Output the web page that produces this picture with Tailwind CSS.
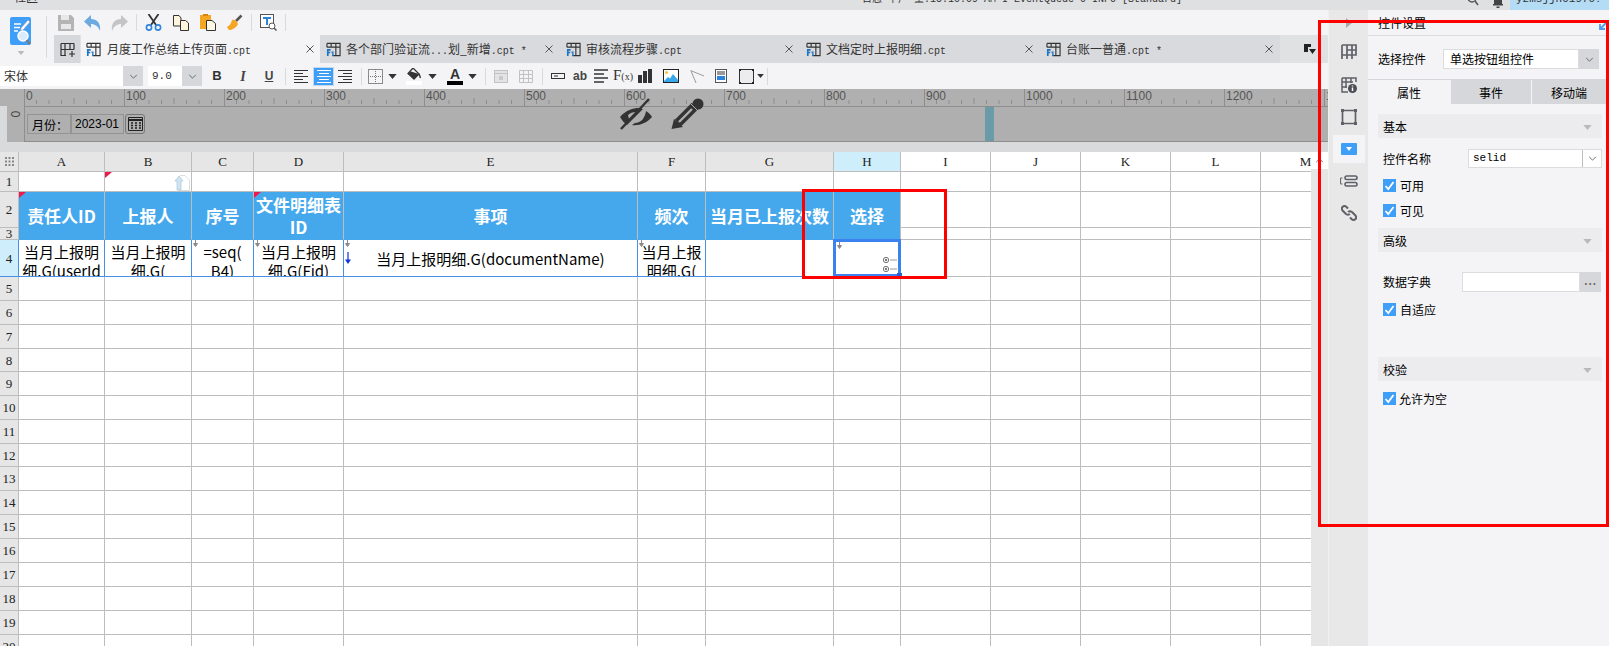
<!DOCTYPE html>
<html lang="zh">
<head>
<meta charset="utf-8">
<script src="https://cdn.jsdelivr.net/npm/@tailwindcss/browser@4"></script>
<title>报表设计器</title>
</head>
<body class="m-0 bg-[#f4f4f6]">
<svg class="hidden">
  <symbol id="cpt" viewBox="0 0 16 16">
    <path d="M5.500 1.500H15V14.500H7M5.500 1.500V5.500M1 1.500H5.500M1 1.500V5.500M1 5.500H15M10.500 1.500V14.500" fill="none" stroke="#333" stroke-width="1.200"/>
    <path d="M1 7.500H5V9.300H2.800V10.500H4.500V12H2.800V15H1Z" fill="#1d75c4"/>
    <path d="M5.800 10H8V15H6.600V11.500H5.800Z" fill="#1d75c4"/>
  </symbol>
  <symbol id="x" viewBox="0 0 10 10"><path d="M1.500 1.500L8.500 8.500M8.500 1.500L1.500 8.500" stroke="#555" stroke-width="1" fill="none"/></symbol>
  <symbol id="chev" viewBox="0 0 10 6"><path d="M1 1L5 5L9 1" stroke="#555" stroke-width="1" fill="none"/></symbol>
  <symbol id="tri" viewBox="0 0 10 6"><path d="M0 0H10L5 6Z" fill="#333"/></symbol>
  <symbol id="tg" viewBox="0 0 10 6"><path d="M0 0H10L5 6Z" fill="#b9b9bb"/></symbol>
  <symbol id="chk" viewBox="0 0 13 13"><path d="M2.500 7L5.300 10L10.500 3" stroke="#fff" stroke-width="1.800" fill="none"/></symbol>
  <symbol id="down" viewBox="0 0 7 7"><path d="M3.500 0V4M1.500 3.500H5.500L3.500 6.500Z" stroke="#8a8a8a" stroke-width="1" fill="#8a8a8a"/></symbol>
</svg>

<div class="relative w-[1609px] h-[646px] overflow-hidden flex flex-col font-['Noto_Sans_CJK_SC',sans-serif] text-black">
  <!-- title bar -->
  <div class="h-[10px] shrink-0 bg-[#dfe0e2] flex items-start overflow-hidden text-[12px] leading-[14px] text-[#333]">
    <span class="ml-[14px] mt-[-10px] w-[848px]">社区</span>
    <span class="mt-[-7px] w-[600px] whitespace-nowrap font-['Liberation_Mono','Noto_Sans_CJK_SC',monospace] text-[10px]">日志 下户 量:15:10:09 AM I EventQueue-0 INFO [Standard]</span>
    <svg class="ml-[5px] mt-[-3px] w-[12px] h-[10px]" viewBox="0 0 12 10"><circle cx="5" cy="1" r="4" fill="none" stroke="#555" stroke-width="1.300"/><path d="M8 4L11 8" stroke="#555" stroke-width="1.500"/></svg>
    <svg class="ml-[14px] w-[10px] h-[8px]" viewBox="0 0 10 8"><path d="M1 0H9V4H10V5.500H0V4H1ZM3.500 6.500H6.500V8H3.500Z" fill="#444"/></svg>
    <div class="ml-[7px] w-[99px] h-[10px] bg-[#b5dcf5] pl-[6px] font-['Liberation_Mono',monospace] text-[11px]"><span class="block mt-[-8px]">yzmsjjh01970?</span></div>
  </div>

  <div class="flex flex-1 min-h-0">
    <!-- left main -->
    <div class="w-[1328px] shrink-0 flex flex-col">
      <div class="h-[53px] flex bg-[#f4f4f6]">
        <div class="w-[54px] shrink-0 flex">
          <div class="w-[46px] flex flex-col items-center pt-[7px]">
            <div class="mr-[5px]">
              <svg class="w-[22px] h-[29px]" viewBox="0 0 22 29">
                <rect x="0" y="0" width="21" height="28" rx="2" fill="#3f9ef8"/>
                <path d="M4 7H11M4 10.500H10M4 14H8" stroke="#fff" stroke-width="1.300"/>
                <path d="M11 11L18 3L20 5L13 13L10.500 13.500Z" fill="#fff" stroke="#8a8a8a" stroke-width=".5"/>
                <circle cx="13" cy="19" r="5" fill="#d8ecfb" stroke="#fff" stroke-width="1.500"/>
                <path d="M16.500 23L20 27" stroke="#7a7a7a" stroke-width="2"/>
              </svg>
              <svg class="w-[8px] h-[4px] ml-[7px] mt-[5px]" viewBox="0 0 10 6"><use href="#tg"/></svg>
            </div>
          </div>
          <div class="w-px h-[42px] mt-[6px] bg-[#d9dadc]"></div>
        </div>
        <div class="flex-1 flex flex-col min-w-0">
          <!-- toolbar -->
          <div class="h-[25px] flex items-center ml-[-2px]">
            <span class="w-[27px] flex justify-center"><svg class="w-[16px] h-[16px]" viewBox="0 0 16 16"><path d="M0 0H13L16 3V16H0Z" fill="#b4b4b4"/><rect x="3" y="0" width="8" height="5" fill="#e8e8e8"/><rect x="3" y="9" width="10" height="5" fill="#e8e8e8"/></svg></span>
            <span class="w-[27px] flex justify-center"><svg class="w-[17px] h-[16px]" viewBox="0 0 17 16"><path d="M7 0V4C13 4 17 8 16 16C14 11 11 9 7 9V13L0 6.500Z" fill="#6ba9e0"/></svg></span>
            <span class="w-[27px] flex justify-center"><svg class="w-[17px] h-[16px]" viewBox="0 0 17 16"><path d="M10 0V4C4 4 0 8 1 16C3 11 6 9 10 9V13L17 6.500Z" fill="#c4c4c6"/></svg></span>
            <span class="w-px h-[17px] bg-[#d9dadc] ml-[3px] mr-[3px]"></span>
            <span class="w-[27px] flex justify-center"><svg class="w-[17px] h-[17px]" viewBox="0 0 17 17"><path d="M3.500 0L11 11M13.500 0L6 11" stroke="#333" stroke-width="1.800" fill="none"/><circle cx="4" cy="13.500" r="2.600" fill="none" stroke="#2c83df" stroke-width="1.600"/><circle cx="13" cy="13.500" r="2.600" fill="none" stroke="#2c83df" stroke-width="1.600"/></svg></span>
            <span class="w-[27px] flex justify-center"><svg class="w-[16px] h-[16px]" viewBox="0 0 16 16"><path d="M.5.500H6L8 3V11H.5Z" fill="#fff5dc" stroke="#333"/><path d="M7.500 5.500H12.500L15.500 8V15.500H7.500Z" fill="#fff5dc" stroke="#333"/></svg></span>
            <span class="w-[27px] flex justify-center"><svg class="w-[16px] h-[17px]" viewBox="0 0 16 17"><rect x="0" y="1" width="11" height="14" fill="#f5a623"/><rect x="3" y="0" width="5" height="2" fill="#d9860f"/><path d="M6.500 6.500H12L15.500 9.500V16.500H6.500Z" fill="#fff8e6" stroke="#333"/></svg></span>
            <span class="w-[27px] flex justify-center"><svg class="w-[16px] h-[17px]" viewBox="0 0 16 17"><path d="M9 7L14.500 1.500" stroke="#555" stroke-width="2.500"/><path d="M5 6C7 5 10 7 11 10C9 14 5 16 2 16C1 15 .5 14 0 13C2 12 4 10 5 6Z" fill="#f5a623"/></svg></span>
            <span class="w-px h-[17px] bg-[#d9dadc] ml-[3px] mr-[3px]"></span>
            <span class="w-[27px] flex justify-center"><svg class="w-[17px] h-[17px]" viewBox="0 0 17 17"><rect x=".5" y=".5" width="13" height="13" fill="#fff" stroke="#555"/><path d="M3 3H11V5H8V11H6V5H3Z" fill="#2c83df"/><circle cx="12" cy="12" r="3" fill="#fff" stroke="#555"/><path d="M14 14L16.500 16.500" stroke="#555" stroke-width="1.500"/></svg></span>
            <span class="w-px h-[17px] bg-[#d9dadc] ml-[3px]"></span>
          </div>
          <!-- tabs -->
          <div class="h-[28px] flex items-stretch text-[12px] text-[#333] font-['Noto_Sans_CJK_SC',sans-serif]">
            <div class="w-[26px] bg-[#d6d7da] flex items-center justify-center"><svg class="w-[15px] h-[15px]" viewBox="0 0 15 15"><path d="M1 1.500H14M1 7.500H14M1 1.500V13.500H6M5 1.500V13.500M10 1.500V7.500M14 1.500V7.500M9 12H15M12 9V15" stroke="#333" stroke-width="1.200" fill="none"/></svg></div>
            <div class="w-[240px] bg-[#f4f4f6] flex items-center pl-[5px] border-l border-[#e2e2e4]">
              <svg class="w-[15px] h-[15px] shrink-0"><use href="#cpt"/></svg>
              <span class="ml-[6px] w-[198px] whitespace-nowrap">月度工作总结上传页面<span class="font-['Liberation_Mono',monospace] text-[10px]">.cpt</span></span>
              <svg class="w-[10px] h-[10px]"><use href="#x"/></svg>
            </div>
            <div class="w-[240px] bg-[#d9dadd] flex items-center pl-[6px]">
              <svg class="w-[15px] h-[15px] shrink-0"><use href="#cpt"/></svg>
              <span class="ml-[5px] w-[198px] whitespace-nowrap">各个部门验证流<span class="font-['Liberation_Mono',monospace] text-[10px]">...</span>划_新增<span class="font-['Liberation_Mono',monospace] text-[10px]">.cpt *</span></span>
              <svg class="w-[10px] h-[10px]"><use href="#x"/></svg>
            </div>
            <div class="w-[240px] bg-[#d9dadd] flex items-center pl-[6px]">
              <svg class="w-[15px] h-[15px] shrink-0"><use href="#cpt"/></svg>
              <span class="ml-[5px] w-[198px] whitespace-nowrap">审核流程步骤<span class="font-['Liberation_Mono',monospace] text-[10px]">.cpt</span></span>
              <svg class="w-[10px] h-[10px]"><use href="#x"/></svg>
            </div>
            <div class="w-[240px] bg-[#d9dadd] flex items-center pl-[6px]">
              <svg class="w-[15px] h-[15px] shrink-0"><use href="#cpt"/></svg>
              <span class="ml-[5px] w-[198px] whitespace-nowrap">文档定时上报明细<span class="font-['Liberation_Mono',monospace] text-[10px]">.cpt</span></span>
              <svg class="w-[10px] h-[10px]"><use href="#x"/></svg>
            </div>
            <div class="w-[240px] bg-[#d9dadd] flex items-center pl-[6px]">
              <svg class="w-[15px] h-[15px] shrink-0"><use href="#cpt"/></svg>
              <span class="ml-[5px] w-[198px] whitespace-nowrap">台账一普通<span class="font-['Liberation_Mono',monospace] text-[10px]">.cpt *</span></span>
              <svg class="w-[10px] h-[10px]"><use href="#x"/></svg>
            </div>
            <div class="flex-1 bg-[#e0e1e3] flex items-center pl-[24px]"><svg class="w-[12px] h-[11px]" viewBox="0 0 12 11"><path d="M0 0H7V3H4V8H0Z" fill="#222"/><path d="M5 5H12L8.500 10Z" fill="#222"/></svg></div>
          </div>
        </div>
      </div>

      <!-- format row -->
      <div class="h-[26px] shrink-0 bg-[#f4f4f6] flex items-center text-[#333]">
        <div class="w-[143px] h-[20px] flex bg-[#d6d7da]"><span class="w-[123px] bg-white text-[12px] leading-[20px] pl-[4px]">宋体</span><span class="flex-1 flex items-center justify-center"><svg class="w-[9px] h-[5px]"><use href="#chev"/></svg></span></div>
        <div class="ml-[5px] w-[54px] h-[20px] flex bg-[#d6d7da]"><span class="w-[34px] bg-white text-[11px] leading-[20px] pl-[4px] font-['Liberation_Mono',monospace]">9.0</span><span class="flex-1 flex items-center justify-center"><svg class="w-[9px] h-[5px]"><use href="#chev"/></svg></span></div>
        <span class="w-[26px] ml-[2px] text-center text-[13px] font-bold font-['Liberation_Sans',sans-serif]">B</span>
        <span class="w-[26px] text-center text-[14px] italic font-bold font-['Liberation_Serif',serif] text-[#444]">I</span>
        <span class="w-[26px] text-center text-[12px] font-bold underline font-['Liberation_Sans',sans-serif] text-[#444]">U</span>
        <span class="w-px h-[17px] bg-[#d9dadc] ml-[3px]"></span>
        <span class="ml-[8px] w-[14px] flex"><svg class="w-[14px] h-[13px]" viewBox="0 0 14 13"><path d="M0 .5H14M0 3.500H9M0 6.500H14M0 9.500H9M0 12.500H14" stroke="#333"/></svg></span>
        <span class="ml-[5px] w-[21px] h-[19px] bg-[#3f9ef8] border border-[#c6d9ec] flex items-center justify-center"><svg class="w-[14px] h-[13px]" viewBox="0 0 14 13"><path d="M0 .5H14M2 3.500H12M0 6.500H14M2 9.500H12M0 12.500H14" stroke="#fff"/></svg></span>
        <span class="ml-[4px] w-[14px] flex"><svg class="w-[14px] h-[13px]" viewBox="0 0 14 13"><path d="M0 .5H14M5 3.500H14M0 6.500H14M5 9.500H14M0 12.500H14" stroke="#333"/></svg></span>
        <span class="w-px h-[17px] bg-[#d9dadc] ml-[9px]"></span>
        <svg class="ml-[6px] w-[15px] h-[15px]" viewBox="0 0 15 15"><path d="M.5.500H14.500V14.500H.5Z" fill="none" stroke="#222" stroke-dasharray="1 1"/><path d="M7.500 0V15M0 7.500H15" fill="none" stroke="#777" stroke-dasharray="1 1"/></svg>
        <svg class="ml-[5px] w-[9px] h-[5px]"><use href="#tri"/></svg>
        <span class="ml-[9px] w-[16px] h-[17px] flex flex-col items-center"><svg class="w-[14px] h-[12px]" viewBox="0 0 14 12"><path d="M6 0L12 6L7 11L1 5.500Z" fill="#f4f4f6" stroke="#333" stroke-width="1.300"/><path d="M4 3.500L12 6L7 11L1 5.500Z" fill="#333"/><path d="M12 6C13 8 13.500 9 13 10" stroke="#333" stroke-width="1.500" fill="none"/></svg><span class="w-[16px] h-[4px] bg-white mt-[1px]"></span></span>
        <svg class="ml-[6px] w-[9px] h-[5px]"><use href="#tri"/></svg>
        <span class="ml-[10px] w-[16px] h-[18px] flex flex-col items-center"><span class="text-[14px] leading-[14px] font-bold font-['Liberation_Sans',sans-serif]">A</span><span class="w-[16px] h-[4px] bg-black"></span></span>
        <svg class="ml-[5px] w-[9px] h-[5px]"><use href="#tri"/></svg>
        <span class="w-px h-[17px] bg-[#d9dadc] ml-[8px]"></span>
        <svg class="ml-[8px] w-[14px] h-[13px]" viewBox="0 0 14 13"><rect x=".5" y=".5" width="13" height="12" fill="#e3e3e5" stroke="#c2c2c4"/><path d="M0 3.500H14" stroke="#c2c2c4"/><rect x="5" y="6" width="4" height="4" fill="#c9c9cb"/></svg>
        <svg class="ml-[11px] w-[14px] h-[13px]" viewBox="0 0 14 13"><path d="M.5.500H13.500V12.500H.5ZM0 4.500H14M0 8.500H14M4.500 0V13M9.500 0V13" fill="none" stroke="#c2c2c4"/></svg>
        <span class="w-px h-[17px] bg-[#d9dadc] ml-[9px]"></span>
        <svg class="ml-[8px] w-[14px] h-[6px]" viewBox="0 0 14 6"><rect x=".5" y=".5" width="13" height="5" fill="none" stroke="#333"/><path d="M3 3H7" stroke="#333"/></svg>
        <span class="ml-[5px] w-[20px] text-center text-[12px] font-bold font-['Liberation_Sans',sans-serif] text-[#444]">ab</span>
        <svg class="ml-[4px] w-[14px] h-[14px]" viewBox="0 0 14 14"><path d="M0 1H14M0 5H10M0 9H14M0 13H10" stroke="#333" stroke-width="1.700"/></svg>
        <span class="ml-[5px] w-[20px] text-[15px] leading-[15px] font-['Liberation_Serif',serif] text-[#333] whitespace-nowrap">F<span class="text-[10px]">(x)</span></span>
        <svg class="ml-[5px] w-[14px] h-[14px]" viewBox="0 0 14 14"><path d="M0 6H4V14H0ZM5 2H9V14H5ZM10 0H14V14H10Z" fill="#333"/></svg>
        <svg class="ml-[11px] w-[16px] h-[14px]" viewBox="0 0 16 14"><rect x=".5" y=".5" width="15" height="13" fill="#fff" stroke="#222"/><circle cx="3.500" cy="3.500" r="1.500" fill="#f5c33b"/><path d="M1 12L5 8L7 9.500L10 5L15 11V13H1Z" fill="#37a8ec"/></svg>
        <svg class="ml-[11px] w-[14px] h-[13px]" viewBox="0 0 14 13"><path d="M.5.500L14 6M1 1L6 13" stroke="#9a9a9a" fill="none"/></svg>
        <svg class="ml-[11px] w-[12px] h-[14px]" viewBox="0 0 12 14"><rect x=".5" y=".5" width="11" height="13" fill="#fff" stroke="#555"/><path d="M2 3H10M2 5H10" stroke="#333"/><rect x="2" y="7" width="8" height="4" fill="#2c83df"/></svg>
        <svg class="ml-[12px] w-[15px] h-[15px]" viewBox="0 0 15 15"><path d="M.5.500H14.500V14.500H.5Z" fill="#ececee" stroke="#333"/><path d="M0 0H2V2H0ZM13 0H15V2H13ZM0 13H2V15H0ZM13 13H15V15H13Z" fill="#222"/></svg>
        <svg class="ml-[3px] w-[7px] h-[4px]"><use href="#tri"/></svg>
        <span class="w-px h-[17px] bg-[#d9dadc] ml-[3px]"></span>
      </div>

      <!-- ruler -->
      <div class="h-[17px] shrink-0 bg-[#b0b0b0] relative overflow-hidden pl-[24px] flex text-[12px] leading-[15px] text-[#555] font-['Liberation_Sans',sans-serif]">
        <svg class="absolute left-0 top-0 w-[1328px] h-[17px]">
          <defs><pattern id="ticks" x="24" y="0" width="100" height="17" patternUnits="userSpaceOnUse"><path d="M.5 0V17M12.500 11V15M25 11V15M37.500 11V15M50 9V15M62.500 11V15M75 11V15M87.500 11V15" stroke="#8e8e8e" fill="none"/></pattern></defs>
          <rect x="24" width="1304" height="17" fill="url(#ticks)"/>
        </svg>
        <span class="w-[100px] shrink-0 pl-[2px] relative">0</span><span class="w-[100px] shrink-0 pl-[2px] relative">100</span><span class="w-[100px] shrink-0 pl-[2px] relative">200</span><span class="w-[100px] shrink-0 pl-[2px] relative">300</span><span class="w-[100px] shrink-0 pl-[2px] relative">400</span><span class="w-[100px] shrink-0 pl-[2px] relative">500</span><span class="w-[100px] shrink-0 pl-[2px] relative">600</span><span class="w-[100px] shrink-0 pl-[2px] relative">700</span><span class="w-[100px] shrink-0 pl-[2px] relative">800</span><span class="w-[100px] shrink-0 pl-[2px] relative">900</span><span class="w-[100px] shrink-0 pl-[2px] relative">1000</span><span class="w-[100px] shrink-0 pl-[2px] relative">1100</span><span class="w-[100px] shrink-0 pl-[2px] relative">1200</span><span class="w-[100px] shrink-0 pl-[2px] relative">1300</span>
      </div>

      <!-- parameter form -->
      <div class="h-[36px] shrink-0 flex bg-[#d9dadc]">
        <div class="ml-[7px] w-[17px] bg-[#b0b0b0] text-[12px] leading-[12px] text-[#444] font-['Liberation_Sans',sans-serif] flex justify-center pt-[2px]"><span class="rotate-90 h-[12px]">0</span></div>
        <div class="flex-1 bg-[#afafaf] border-y border-l border-[#8e8e8e] flex">
          <div class="w-[960px] flex items-start pt-[7px] pl-[2px]">
            <span class="w-[44px] h-[20px] border border-[#949494] text-[12px] leading-[19px] pl-[4px]">月份：</span>
            <span class="w-[53px] h-[20px] border border-[#949494] text-[12px] leading-[18px] pl-[3px] font-['Liberation_Sans',sans-serif]">2023-01</span>
            <span class="ml-[1px] w-[20px] h-[20px] border-[1.500px] border-[#777] rounded-[3px] flex items-center justify-center"><svg class="w-[15px] h-[14px]" viewBox="0 0 15 14"><path d="M.5.500H14.500V13.500H.5Z" fill="none" stroke="#222"/><path d="M0 3H15" stroke="#222" stroke-width="2"/><path d="M3 6H5M7 6H9M11 6H13M3 8.500H5M7 8.500H9M11 8.500H13M3 11H5M7 11H9M11 11H13" stroke="#222" stroke-width="1.500"/></svg></span>
          </div>
          <div class="w-[9px] bg-[#6b9aa8]"></div>
        </div>
      </div>
      <div class="h-[10px] shrink-0 bg-[#d9dadc]"></div>

      <!-- grid -->
      <div class="flex-1 min-h-0 flex overflow-hidden">
        <div class="w-[1311px] shrink-0 overflow-hidden bg-white">
          <table class="w-[1351px] table-fixed border-separate border-spacing-0 [&_td]:border-r [&_td]:border-b [&_td]:border-[#bdbdbd] [&_td]:p-0 [&_td]:relative [&_th]:border-r [&_th]:border-b [&_th]:border-[#bdbdbd] [&_th]:p-0 [&_th]:font-normal [&_th]:text-[13px] [&_th]:leading-[11px] [&_th]:text-[#222] [&_th]:font-['Liberation_Serif',serif]">
            <colgroup><col class="w-[19px]"><col class="w-[86px]"><col class="w-[87px]"><col class="w-[62px]"><col class="w-[90px]"><col class="w-[294px]"><col class="w-[68px]"><col class="w-[128px]"><col class="w-[67px]"><col class="w-[90px]"><col class="w-[90px]"><col class="w-[90px]"><col class="w-[90px]"><col class="w-[90px]"></colgroup>
            <tbody>
              <tr class="h-[20px]">
                <th class="bg-[#e6e6e6]"><svg class="w-[9px] h-[9px] mx-auto" viewBox="0 0 9 9"><path d="M0 1H2M3.500 1H5.500M7 1H9M0 4.500H2M3.500 4.500H5.500M7 4.500H9M0 8H2M3.500 8H5.500M7 8H9" stroke="#888" stroke-width="2"/></svg></th>
                <th class="bg-[#e6e6e6]">A</th><th class="bg-[#e6e6e6]">B</th><th class="bg-[#e6e6e6]">C</th><th class="bg-[#e6e6e6]">D</th><th class="bg-[#e6e6e6]">E</th><th class="bg-[#e6e6e6]">F</th><th class="bg-[#e6e6e6]">G</th><th class="bg-[#cdeefa]">H</th><th class="bg-white">I</th><th class="bg-white">J</th><th class="bg-white">K</th><th class="bg-white">L</th><th class="bg-white">M</th>
              </tr>
              <tr class="h-[20px]">
                <th class="bg-[#e6e6e6]">1</th><td></td>
                <td><svg class="absolute left-0 top-0 w-[7px] h-[6px]" viewBox="0 0 7 6"><path d="M0 0H7L0 6Z" fill="#f0184a"/></svg><svg class="absolute right-[1px] top-[3px] w-[16px] h-[16px]" viewBox="0 0 16 16"><path d="M6 .5H11L15.500 5V15.500H4" fill="none" stroke="#d5dfe6"/><path d="M5 1L9 6H7V15H3V6H1Z" fill="#cfe3f0" stroke="#a9c6d8" stroke-width=".7"/></svg></td>
                <td></td><td></td><td></td><td></td><td></td><td></td><td></td><td></td><td></td><td></td><td></td>
              </tr>
              <tr class="h-[36px]">
                <th class="bg-[#e6e6e6]">2</th>
                <td rowspan="2" class="bg-[#46a8ec] !border-b-[#46a8ec] text-center text-white font-bold text-[17px] leading-[22px]"><svg class="absolute left-0 top-0 w-[7px] h-[6px]" viewBox="0 0 7 6"><path d="M0 0H7L0 6Z" fill="#f0184a"/></svg>责任人ID</td>
                <td rowspan="2" class="bg-[#46a8ec] !border-b-[#46a8ec] text-center text-white font-bold text-[17px] leading-[22px]">上报人</td>
                <td rowspan="2" class="bg-[#46a8ec] !border-b-[#46a8ec] text-center text-white font-bold text-[17px] leading-[22px]">序号</td>
                <td rowspan="2" class="bg-[#46a8ec] !border-b-[#46a8ec] text-center text-white font-bold text-[17px] leading-[22px] whitespace-nowrap"><svg class="absolute left-0 top-0 w-[7px] h-[6px]" viewBox="0 0 7 6"><path d="M0 0H7L0 6Z" fill="#f0184a"/></svg>文件明细表<br>ID</td>
                <td rowspan="2" class="bg-[#46a8ec] !border-b-[#46a8ec] text-center text-white font-bold text-[17px] leading-[22px]">事项</td>
                <td rowspan="2" class="bg-[#46a8ec] !border-b-[#46a8ec] text-center text-white font-bold text-[17px] leading-[22px]">频次</td>
                <td rowspan="2" class="bg-[#46a8ec] !border-b-[#46a8ec] text-center text-white font-bold text-[17px] leading-[22px] whitespace-nowrap">当月已上报次数</td>
                <td rowspan="2" class="bg-[#46a8ec] !border-b-[#46a8ec] text-center text-white font-bold text-[17px] leading-[22px]">选择</td>
                <td></td><td></td><td></td><td></td><td></td>
              </tr>
              <tr class="h-[12px]">
                <th class="bg-[#e6e6e6]">3</th><td></td><td></td><td></td><td></td><td></td>
              </tr>
              <tr class="h-[37px]">
                <th class="bg-[#cdeefa] !border-r-[#4a90e2] !border-b-[#4a90e2]">4</th>
                <td class="!border-r-[#4a90e2] !border-b-[#4a90e2]"><div class="h-[36px] overflow-hidden pt-[2px] text-center text-[15px] leading-[19px] whitespace-nowrap">当月上报明<br>细.G(userId</div></td>
                <td class="!border-r-[#4a90e2] !border-b-[#4a90e2]"><div class="h-[36px] overflow-hidden pt-[2px] text-center text-[15px] leading-[19px] whitespace-nowrap">当月上报明<br>细.G(</div></td>
                <td class="!border-r-[#4a90e2] !border-b-[#4a90e2]"><svg class="absolute left-0 top-0 w-[7px] h-[7px]"><use href="#down"/></svg><div class="h-[36px] overflow-hidden pt-[2px] text-center text-[15px] leading-[19px] whitespace-nowrap">=seq(<br>B4)</div></td>
                <td class="!border-r-[#4a90e2] !border-b-[#4a90e2]"><svg class="absolute left-0 top-0 w-[7px] h-[7px]"><use href="#down"/></svg><div class="h-[36px] overflow-hidden pt-[2px] text-center text-[15px] leading-[19px] whitespace-nowrap">当月上报明<br>细.G(Fid)</div></td>
                <td class="!border-r-[#4a90e2] !border-b-[#4a90e2]"><svg class="absolute left-0 top-0 w-[7px] h-[7px]"><use href="#down"/></svg><svg class="absolute left-[1px] top-[12px] w-[6px] h-[12px]" viewBox="0 0 6 12"><path d="M3 0V8" stroke="#1133dd" stroke-width="1.200"/><path d="M0 7.500H6L3 12Z" fill="#1133dd"/></svg><div class="h-[36px] flex items-center justify-center text-[15px] leading-[19px] whitespace-nowrap">当月上报明细.G(documentName)</div></td>
                <td class="!border-r-[#4a90e2] !border-b-[#4a90e2]"><svg class="absolute left-0 top-0 w-[7px] h-[7px]"><use href="#down"/></svg><div class="h-[36px] overflow-hidden pt-[2px] text-center text-[15px] leading-[19px] whitespace-nowrap">当月上报<br>明细.G(</div></td>
                <td class="!border-b-[#4a90e2]"></td>
                <td class="!border-b-[#4a90e2]">
                  <div class="h-[36px]"></div>
                  <div class="absolute left-[-1px] top-[-1px] right-[-1px] bottom-[-1px] border-[3px] border-[#3b82f0]">
                    <svg class="absolute left-0 top-0 w-[7px] h-[7px]"><use href="#down"/></svg>
                    <svg class="absolute right-[1px] bottom-0 w-[16px] h-[18px]" viewBox="0 0 16 18"><circle cx="5" cy="4" r="2.700" fill="none" stroke="#777"/><circle cx="5" cy="4" r="1.200" fill="#777"/><path d="M9 4H16" stroke="#999"/><circle cx="5" cy="13" r="2.700" fill="none" stroke="#777"/><circle cx="5" cy="13" r="1.200" fill="#777"/><path d="M9 13H16" stroke="#999"/></svg>
                    <span class="absolute right-[-4px] bottom-[-4px] w-[5px] h-[5px] bg-[#2f5fd0]"></span>
                  </div>
                </td>
                <td></td><td></td><td></td><td></td><td></td>
              </tr>
              <tr class="h-[24px]"><th class="bg-[#e6e6e6]">5</th><td></td><td></td><td></td><td></td><td></td><td></td><td></td><td></td><td></td><td></td><td></td><td></td><td></td></tr>
              <tr class="h-[24px]"><th class="bg-[#e6e6e6]">6</th><td></td><td></td><td></td><td></td><td></td><td></td><td></td><td></td><td></td><td></td><td></td><td></td><td></td></tr>
              <tr class="h-[24px]"><th class="bg-[#e6e6e6]">7</th><td></td><td></td><td></td><td></td><td></td><td></td><td></td><td></td><td></td><td></td><td></td><td></td><td></td></tr>
              <tr class="h-[23px]"><th class="bg-[#e6e6e6]">8</th><td></td><td></td><td></td><td></td><td></td><td></td><td></td><td></td><td></td><td></td><td></td><td></td><td></td></tr>
              <tr class="h-[24px]"><th class="bg-[#e6e6e6]">9</th><td></td><td></td><td></td><td></td><td></td><td></td><td></td><td></td><td></td><td></td><td></td><td></td><td></td></tr>
              <tr class="h-[24px]"><th class="bg-[#e6e6e6]">10</th><td></td><td></td><td></td><td></td><td></td><td></td><td></td><td></td><td></td><td></td><td></td><td></td><td></td></tr>
              <tr class="h-[24px]"><th class="bg-[#e6e6e6]">11</th><td></td><td></td><td></td><td></td><td></td><td></td><td></td><td></td><td></td><td></td><td></td><td></td><td></td></tr>
              <tr class="h-[23px]"><th class="bg-[#e6e6e6]">12</th><td></td><td></td><td></td><td></td><td></td><td></td><td></td><td></td><td></td><td></td><td></td><td></td><td></td></tr>
              <tr class="h-[24px]"><th class="bg-[#e6e6e6]">13</th><td></td><td></td><td></td><td></td><td></td><td></td><td></td><td></td><td></td><td></td><td></td><td></td><td></td></tr>
              <tr class="h-[24px]"><th class="bg-[#e6e6e6]">14</th><td></td><td></td><td></td><td></td><td></td><td></td><td></td><td></td><td></td><td></td><td></td><td></td><td></td></tr>
              <tr class="h-[24px]"><th class="bg-[#e6e6e6]">15</th><td></td><td></td><td></td><td></td><td></td><td></td><td></td><td></td><td></td><td></td><td></td><td></td><td></td></tr>
              <tr class="h-[24px]"><th class="bg-[#e6e6e6]">16</th><td></td><td></td><td></td><td></td><td></td><td></td><td></td><td></td><td></td><td></td><td></td><td></td><td></td></tr>
              <tr class="h-[24px]"><th class="bg-[#e6e6e6]">17</th><td></td><td></td><td></td><td></td><td></td><td></td><td></td><td></td><td></td><td></td><td></td><td></td><td></td></tr>
              <tr class="h-[24px]"><th class="bg-[#e6e6e6]">18</th><td></td><td></td><td></td><td></td><td></td><td></td><td></td><td></td><td></td><td></td><td></td><td></td><td></td></tr>
              <tr class="h-[24px]"><th class="bg-[#e6e6e6]">19</th><td></td><td></td><td></td><td></td><td></td><td></td><td></td><td></td><td></td><td></td><td></td><td></td><td></td></tr>
              <tr class="h-[24px]"><th class="bg-[#e6e6e6]">20</th><td></td><td></td><td></td><td></td><td></td><td></td><td></td><td></td><td></td><td></td><td></td><td></td><td></td></tr>
            </tbody>
          </table>
        </div>
        <!-- scrollbar -->
        <div class="flex-1 flex flex-col bg-[#e6e6e6]">
          <div class="h-[17px] bg-white flex items-center justify-center"><svg class="w-[9px] h-[5px] rotate-180"><use href="#chev"/></svg></div>
        </div>
      </div>
    </div>

    <!-- icon strip -->
    <div class="w-[40px] shrink-0 bg-[#e8e8e8] border-l border-[#f0f0f2] flex flex-col items-center">
      <svg class="mt-[8px] w-[6px] h-[10px]" viewBox="0 0 6 10"><path d="M0 0L6 5L0 10Z" fill="#a9a9ab"/></svg>
      <svg class="mt-[16px] w-[16px] h-[16px]" viewBox="0 0 16 16"><path d="M1 1H15V11H1M1 1V15M6 1V15M11 1V15M6 6H15" fill="none" stroke="#5f6068" stroke-width="1.700"/></svg>
      <svg class="mt-[17px] w-[16px] h-[16px]" viewBox="0 0 16 16"><path d="M1 1H15V5M1 1V15H7M5 1V11M10 1V6M1 5H12M1 10H6" fill="none" stroke="#5f6068" stroke-width="1.500"/><circle cx="11.500" cy="11.500" r="4.500" fill="#4d4e55"/><path d="M11.500 8.500V9.500M11.500 10.500V14" stroke="#fff" stroke-width="1.500"/></svg>
      <svg class="mt-[16px] w-[16px] h-[16px]" viewBox="0 0 16 16"><path d="M1.500 1.500H14.500V14.500H1.500Z" fill="none" stroke="#5f6068" stroke-width="1.700"/><path d="M0 0H3V3H0ZM13 0H16V3H13ZM0 13H3V16H0ZM13 13H16V16H13Z" fill="#5f6068"/></svg>
      <div class="mt-[10px] w-[32px] h-[28px] bg-[#f4f4f6] flex items-center justify-center"><div class="w-[16px] h-[12px] rounded-[1px] bg-[#3f9ef8] flex items-center justify-center"><svg class="w-[6px] h-[4px]" viewBox="0 0 6 4"><path d="M0 0H6L3 4Z" fill="#fff"/></svg></div></div>
      <svg class="mt-[12px] w-[18px] h-[12px]" viewBox="0 0 18 12"><path d="M2.500 3H.6V9H2.500" fill="none" stroke="#5f6068"/><rect x="5" y="1" width="12" height="3.500" rx="1.700" fill="none" stroke="#5f6068" stroke-width="1.600"/><rect x="5" y="7.500" width="12" height="3.500" rx="1.700" fill="none" stroke="#5f6068" stroke-width="1.600"/></svg>
      <svg class="mt-[18px] w-[16px] h-[16px]" viewBox="0 0 16 16"><path d="M7 3.500L5.500 2C4 .7 2.500 1 1.500 2S.5 4.500 2 6L5 9C6.500 10 8 10 8.800 8.800" fill="none" stroke="#5f6068" stroke-width="2"/><path d="M9 12.500L10.500 14C12 15.300 13.500 15 14.500 14S15.500 11.500 14 10L11 7C9.500 6 8 6 7.200 7.200" fill="none" stroke="#5f6068" stroke-width="2"/></svg>
    </div>

    <!-- settings panel -->
    <div class="flex-1 bg-[#f4f4f6] text-[12px] leading-[16px] text-black min-w-0">
      <div class="h-[26px] border-b border-[#dcdcde] flex items-end pb-[4px] pl-[10px] pr-[1px]">
        <span class="flex-1">控件设置</span>
        <svg class="w-[9px] h-[9px] mb-[1px]" viewBox="0 0 9 9"><path d="M8.500.5L2 7M1 3V8H6" fill="none" stroke="#4a9fee" stroke-width="1.800"/></svg>
      </div>
      <div class="mt-[13px] h-[20px] flex items-center pl-[10px]">
        <span class="w-[65px]">选择控件</span>
        <div class="w-[156px] h-[20px] flex bg-[#d6d7da]"><span class="w-[136px] bg-white border border-[#dcdcde] leading-[18px] pl-[6px]">单选按钮组控件</span><span class="flex-1 flex items-center justify-center"><svg class="w-[9px] h-[5px]"><use href="#chev"/></svg></span></div>
      </div>
      <div class="mt-[10px] h-[25px] flex border-t border-[#d6d7da] text-center leading-[25px]">
        <span class="w-[82px]">属性</span>
        <span class="ml-px w-[80px] bg-[#d6d7da]">事件</span>
        <span class="ml-px w-[74px] bg-[#d6d7da]">移动端</span>
      </div>
      <div class="mt-[10px] ml-[10px] w-[224px] h-[24px] bg-[#ececee] flex items-center px-[5px] pt-[2px] justify-between"><span>基本</span><svg class="w-[9px] h-[5px] mr-[5px]"><use href="#tg"/></svg></div>
      <div class="mt-[11px] ml-[15px] h-[19px] flex items-center">
        <span class="w-[85px]">控件名称</span>
        <div class="w-[134px] h-[19px] flex bg-white border border-[#dcdcde]"><span class="w-[113px] font-['Liberation_Mono',monospace] text-[11px] leading-[16px] pl-[4px]">selid</span><span class="flex-1 border-l border-[#bdbdbd] flex items-center justify-center"><svg class="w-[9px] h-[5px]"><use href="#chev"/></svg></span></div>
      </div>
      <div class="mt-[11px] ml-[15px] h-[13px] flex items-center"><svg class="w-[13px] h-[13px] bg-[#3f9ef8]"><use href="#chk"/></svg><span class="ml-[4px]">可用</span></div>
      <div class="mt-[12px] ml-[15px] h-[13px] flex items-center"><svg class="w-[13px] h-[13px] bg-[#3f9ef8]"><use href="#chk"/></svg><span class="ml-[4px]">可见</span></div>
      <div class="mt-[11px] ml-[10px] w-[224px] h-[24px] bg-[#ececee] flex items-center px-[5px] pt-[2px] justify-between"><span>高级</span><svg class="w-[9px] h-[5px] mr-[5px]"><use href="#tg"/></svg></div>
      <div class="mt-[20px] ml-[15px] h-[20px] flex items-center">
        <span class="w-[79px]">数据字典</span>
        <div class="w-[139px] h-[20px] flex bg-[#d6d7da]"><span class="w-[118px] bg-white border border-[#dcdcde]"></span><span class="flex-1 text-center text-[10px] leading-[18px] tracking-[1px] text-[#666] font-bold">...</span></div>
      </div>
      <div class="mt-[11px] ml-[15px] h-[13px] flex items-center"><svg class="w-[13px] h-[13px] bg-[#3f9ef8]"><use href="#chk"/></svg><span class="ml-[4px]">自适应</span></div>
      <div class="mt-[41px] ml-[10px] w-[224px] h-[24px] bg-[#ececee] flex items-center px-[5px] pt-[2px] justify-between"><span>校验</span><svg class="w-[9px] h-[5px] mr-[5px]"><use href="#tg"/></svg></div>
      <div class="mt-[11px] ml-[15px] h-[13px] flex items-center"><svg class="w-[13px] h-[13px] bg-[#3f9ef8]"><use href="#chk"/></svg><span class="ml-[3px]">允许为空</span></div>
    </div>
  </div>

  <!-- annotations over the page -->
  <svg class="absolute left-[618px] top-[96px] w-[90px] h-[36px]" viewBox="0 0 90 36">
    <path d="M2 21C8 14 15 12 21 12L25 13L9 29C6 27 4 24 2 21Z" fill="#333"/>
    <path d="M10 19C12 17 15 16 18 16L11 23Z" fill="#afafaf"/>
    <path d="M28 15C31 17 33 19 34 21C29 27 21 30 14 29L17 27C23 27 27 22 28 15Z" fill="#333"/>
    <path d="M3 33L31 3" stroke="#333" stroke-width="2.500"/>
    <path d="M53.500 33L56 23L65 31Z" fill="#333"/>
    <path d="M60 27L77 10" stroke="#333" stroke-width="9"/>
    <path d="M61 26L74 13" stroke="#afafaf" stroke-width="2.300"/>
    <circle cx="80" cy="8" r="5.500" fill="#333"/>
    <path d="M73 8L80 15" stroke="#afafaf" stroke-width="1"/>
  </svg>
  <div class="absolute left-[802px] top-[189px] w-[145px] h-[90px] border-[3px] border-[#ff0000]"></div>
  <div class="absolute left-[1318px] top-[20px] w-[291px] h-[507px] border-[3px] border-[#ff0000]"></div>
</div>
</body>
</html>
